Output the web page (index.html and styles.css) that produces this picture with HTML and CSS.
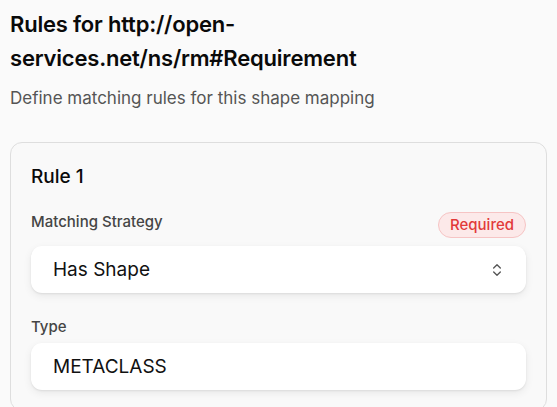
FILE: index.html
```html
<!DOCTYPE html>
<html lang="en">
<head>
<meta charset="utf-8">
<title>Rules</title>
<link rel="stylesheet" href="styles.css">
</head>
<body>
<main class="page">
  <header class="head">
    <h1 class="title">Rules for http://open-services.net/ns/rm#Requirement</h1>
    <p class="subtitle">Define matching rules for this shape mapping</p>
  </header>
  <section class="card">
    <h2 class="rule-title">Rule 1</h2>
    <div class="field">
      <div class="label-row">
        <span class="label">Matching Strategy</span>
        <span class="badge">Required</span>
      </div>
      <div class="control select">
        <span class="value">Has Shape</span>
        <svg class="chev" width="16" height="16" viewBox="0 0 24 24" fill="none" stroke="currentColor" stroke-width="2" stroke-linecap="round" stroke-linejoin="round"><path d="m7 15 5 5 5-5"/><path d="m7 9 5-5 5 5"/></svg>
      </div>
    </div>
    <div class="field">
      <div class="label-row">
        <span class="label">Type</span>
      </div>
      <div class="control">
        <span class="value">METACLASS</span>
      </div>
    </div>
  </section>
</main>
</body>
</html>
```
FILE: styles.css
```css
* { box-sizing: border-box; }
html, body { margin: 0; padding: 0; }
body {
  background: #fafafa;
  font-family: Inter, "Noto Sans", "Liberation Sans", sans-serif;
  color: #111;
  overflow: hidden;
}
.page {
  padding: 7px 10px 0 10px;
}
.head { display: flex; flex-direction: column; }
.title {
  margin: 0;
  font-size: 22px;
  font-weight: 600;
  line-height: 34px;
  color: #0a0a0a;
  letter-spacing: -0.2px;
}
.subtitle {
  margin: 12px 0 0 0;
  font-size: 17px;
  line-height: 22px;
  color: #555;
}
.card {
  margin-top: 33px;
  border: 1px solid #dedede;
  border-radius: 12px;
  background: #f9f9f9;
  padding: 20px 20px 20px 20px;
  display: flex;
  flex-direction: column;
}
.rule-title {
  margin: 0;
  font-size: 19px;
  font-weight: 500;
  line-height: 28px;
  color: #0a0a0a;
}
.field { display: flex; flex-direction: column; }
.field + .field { margin-top: 24px; }
.rule-title + .field { margin-top: 21px; }
.label-row {
  display: flex;
  justify-content: space-between;
  align-items: flex-start;
}
.label {
  font-size: 15px;
  font-weight: 500;
  line-height: 20px;
  color: #454545;
}
.badge {
  height: 26px;
  padding: 0 11px;
  border-radius: 13px;
  background: #fce9e9;
  border: 1px solid #f6c4c4;
  color: #e23a3a;
  font-size: 15px;
  font-weight: 500;
  line-height: 24px;
}
.label-row + .control { margin-top: 6px; }
.label-row:has(.badge) + .control { margin-top: 8px; }
.control {
  height: 47px;
  background: #fff;
  border-radius: 11px;
  box-shadow: 0 1px 2px rgba(0,0,0,0.08), 0 3px 8px rgba(0,0,0,0.07);
  display: flex;
  align-items: center;
  justify-content: space-between;
  padding: 0 21px 0 22px;
}
.value {
  font-size: 19px;
  line-height: 24px;
  color: #111;
}
.chev { color: #555; }
```
